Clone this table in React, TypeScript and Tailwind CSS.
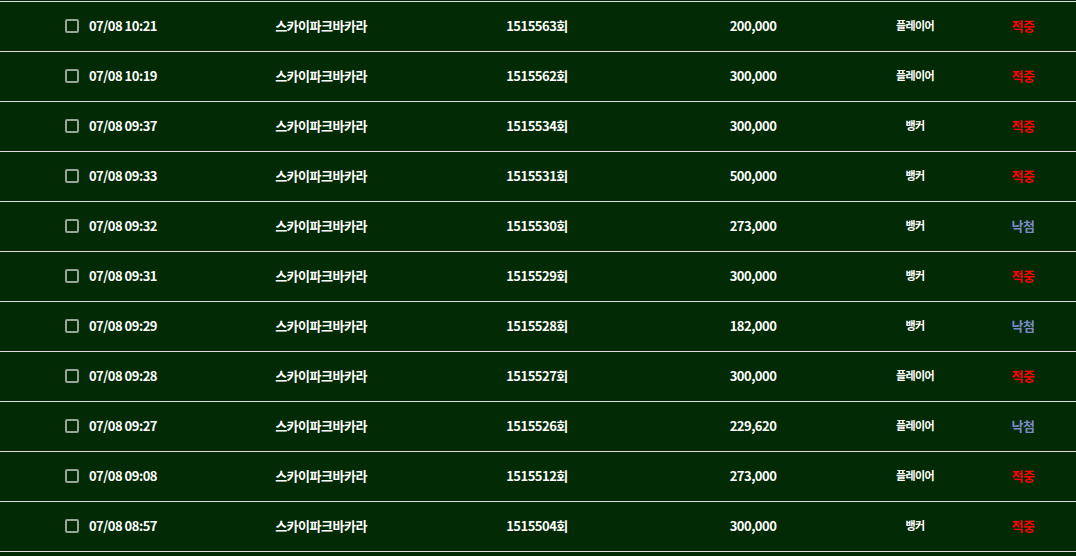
const rows = [
  { time: "07/08 10:21", round: "1515563회", amount: "200,000", pick: "플레이어", hit: true },
  { time: "07/08 10:19", round: "1515562회", amount: "300,000", pick: "플레이어", hit: true },
  { time: "07/08 09:37", round: "1515534회", amount: "300,000", pick: "뱅커", hit: true },
  { time: "07/08 09:33", round: "1515531회", amount: "500,000", pick: "뱅커", hit: true },
  { time: "07/08 09:32", round: "1515530회", amount: "273,000", pick: "뱅커", hit: false },
  { time: "07/08 09:31", round: "1515529회", amount: "300,000", pick: "뱅커", hit: true },
  { time: "07/08 09:29", round: "1515528회", amount: "182,000", pick: "뱅커", hit: false },
  { time: "07/08 09:28", round: "1515527회", amount: "300,000", pick: "플레이어", hit: true },
  { time: "07/08 09:27", round: "1515526회", amount: "229,620", pick: "플레이어", hit: false },
  { time: "07/08 09:08", round: "1515512회", amount: "273,000", pick: "플레이어", hit: true },
  { time: "07/08 08:57", round: "1515504회", amount: "300,000", pick: "뱅커", hit: true },
];

const App = () => {
  return (
    <div className="w-[1076px] h-[556px] overflow-hidden bg-[#022a04] pt-px font-['Noto_Sans_CJK_KR','Noto_Sans',sans-serif] font-bold text-white">
      <div className="border-b border-[#dcdcdc]">
        {rows.map((r) => (
          <div
            key={r.round}
            className="grid grid-cols-[221px_200px_232px_200px_124px_92px_1fr] items-center h-[50px] pb-[2px] border-t border-[#dcdcdc] text-[13px] leading-none tracking-[-0.5px]"
          >
            <div className="flex items-center justify-center gap-[10px] pl-[1px]">
              <span className="shrink-0 w-[14px] h-[14px] border-2 border-[#9aa598] rounded-[2px]" />
              <span>{r.time}</span>
            </div>
            <div className="text-center">스카이파크바카라</div>
            <div className="text-center">{r.round}</div>
            <div className="text-center">{r.amount}</div>
            <div className="text-center text-[11px] tracking-[-0.6px]">{r.pick}</div>
            <div className={r.hit ? "text-center text-[#ff0000]" : "text-center text-[#7b8bc4]"}>
              {r.hit ? "적중" : "낙첨"}
            </div>
            <div />
          </div>
        ))}
      </div>
    </div>
  );
};

export default App;
